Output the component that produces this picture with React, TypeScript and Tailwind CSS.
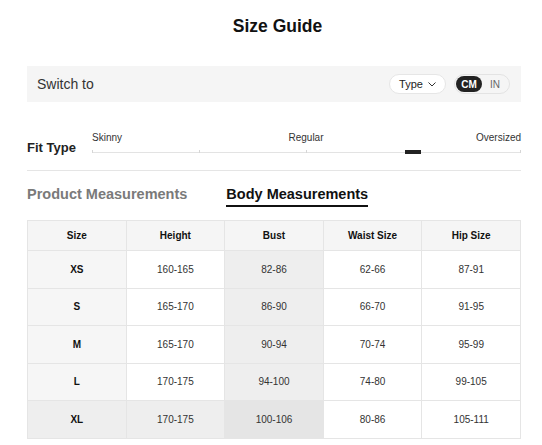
const font = { fontFamily: '"Liberation Sans", Arial, sans-serif' };

const rows = [
  { size: 'XS', height: '160-165', bust: '82-86', waist: '62-66', hip: '87-91' },
  { size: 'S', height: '165-170', bust: '86-90', waist: '66-70', hip: '91-95' },
  { size: 'M', height: '165-170', bust: '90-94', waist: '70-74', hip: '95-99' },
  { size: 'L', height: '170-175', bust: '94-100', waist: '74-80', hip: '99-105' },
  { size: 'XL', height: '170-175', bust: '100-106', waist: '80-86', hip: '105-111' },
];

function Chevron() {
  return (
    <svg width="8" height="5" viewBox="0 0 8 5" fill="none" className="ml-[5px]">
      <path d="M0.5 0.5 L4 4 L7.5 0.5" stroke="#333" strokeWidth="1" />
    </svg>
  );
}

function FitSlider() {
  return (
    <div className="relative h-[24px] flex-1">
      <span className="absolute left-0 top-0 text-[10px] leading-[12px] text-[#333]">Skinny</span>
      <span className="absolute left-[214px] top-0 -translate-x-1/2 text-[10px] leading-[12px] text-[#333]">Regular</span>
      <span className="absolute right-0 top-0 text-[10px] leading-[12px] text-[#333]">Oversized</span>
      <div className="absolute left-0 right-0 top-[20px] h-px bg-[#e3e3e3]" />
      <div className="absolute left-0 top-[18px] h-[3px] w-px bg-[#d6d6d6]" />
      <div className="absolute left-[107px] top-[18px] h-[3px] w-px bg-[#d6d6d6]" />
      <div className="absolute left-[214px] top-[18px] h-[3px] w-px bg-[#d6d6d6]" />
      <div className="absolute right-0 top-[18px] h-[3px] w-px bg-[#d6d6d6]" />
      <div className="absolute left-[313px] top-[18px] h-[4px] w-[16px] bg-[#222]" />
    </div>
  );
}

export default function App() {
  return (
    <div className="h-[445px] w-[542px] overflow-hidden bg-white" style={font}>
      <h1 className="pl-[13px] pt-[16px] text-center text-[17.5px] font-bold leading-[20px] text-[#111]">Size Guide</h1>

      <div className="ml-[27px] mt-[30px] flex h-[36px] w-[494px] items-center bg-[#f5f5f5] pl-[10px] pr-[11px]">
        <span className="text-[14px] text-[#333]">Switch to</span>
        <div className="ml-auto flex items-center gap-[8px]">
          <div className="flex h-[20px] w-[57px] items-center justify-center rounded-full border border-[#e6e6e6] bg-white text-[11px] text-[#222]">
            Type
            <Chevron />
          </div>
          <div className="flex h-[20px] items-center rounded-full border border-[#e3e3e3] p-px">
            <span className="flex h-[16px] w-[26px] items-center justify-center rounded-full bg-[#222] text-[10px] font-bold text-white">CM</span>
            <span className="flex h-[16px] w-[26px] items-center justify-center text-[10px] text-[#666]">IN</span>
          </div>
        </div>
      </div>

      <div className="ml-[27px] mt-[30px] flex w-[494px] items-end">
        <span className="w-[65px] text-[13px] font-bold leading-[16px] text-[#222]">Fit Type</span>
        <FitSlider />
      </div>

      <div className="ml-[27px] mt-[14px] h-px w-[494px] bg-[#e5e5e5]" />

      <div className="ml-[27px] mt-[15px] flex gap-[39px] text-[14.5px] font-bold leading-[17px]">
        <span className="pb-[3px] text-[#7a7a7a]">Product Measurements</span>
        <span className="border-b-2 border-[#111] pb-[2px] text-[#111]">Body Measurements</span>
      </div>

      <table className="ml-[27px] mt-[13px] w-[494px] table-fixed border-collapse text-center text-[10px] text-[#333]">
        <thead>
          <tr className="h-[30px] bg-[#f5f5f5]">
            {['Size', 'Height', 'Bust', 'Waist Size', 'Hip Size'].map((h) => (
              <th key={h} className="border border-[#e5e5e5] font-bold text-[#111]">{h}</th>
            ))}
          </tr>
        </thead>
        <tbody>
          {rows.map((r) => {
            const last = r.size === 'XL';
            return (
              <tr key={r.size} className={last ? 'h-[38px] bg-[#eeeeee]' : 'h-[37.5px]'}>
                <td className={`border border-[#e5e5e5] font-bold text-[#111] ${last ? '' : 'bg-[#f6f6f6]'}`}>{r.size}</td>
                <td className="border border-[#e5e5e5]">{r.height}</td>
                <td className={`border border-[#e5e5e5] ${last ? 'bg-[#e5e5e5]' : 'bg-[#eeeeee]'}`}>{r.bust}</td>
                <td className={`border border-[#e5e5e5] ${last ? 'bg-white' : ''}`}>{r.waist}</td>
                <td className={`border border-[#e5e5e5] ${last ? 'bg-white' : ''}`}>{r.hip}</td>
              </tr>
            );
          })}
        </tbody>
      </table>
    </div>
  );
}
